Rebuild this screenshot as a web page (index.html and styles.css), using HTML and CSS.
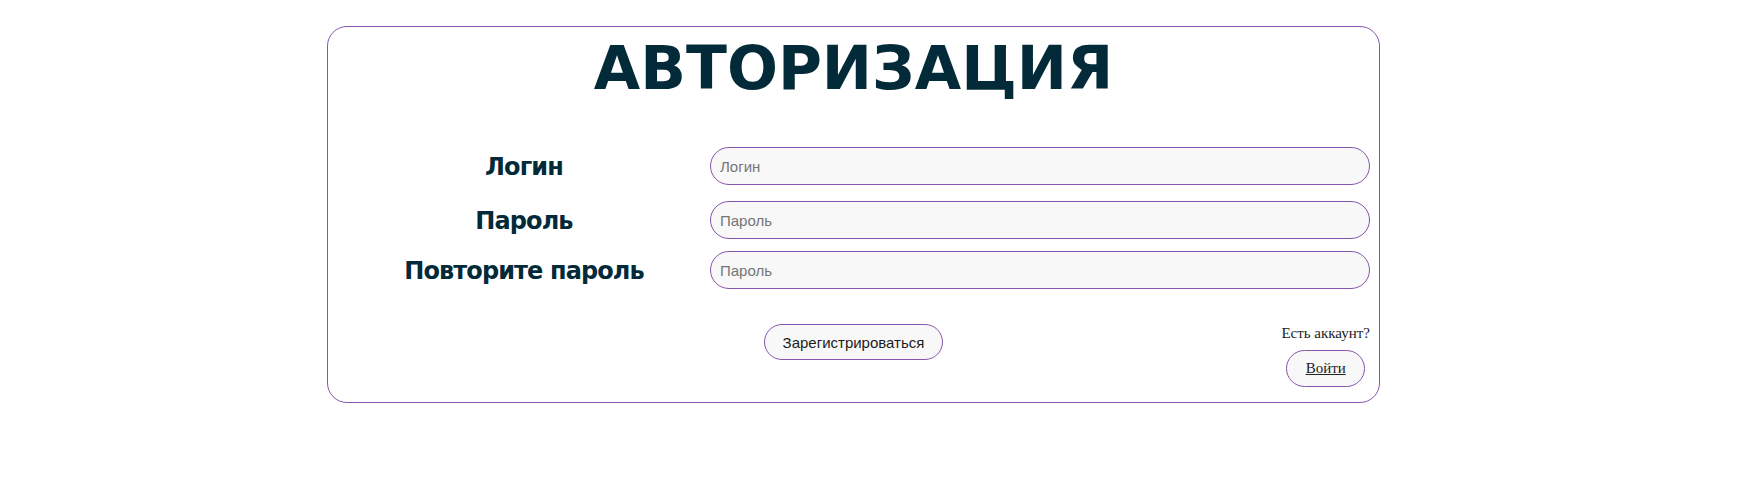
FILE: index.html
```html
<!DOCTYPE html>
<html lang="ru">
<head>
<meta charset="utf-8">
<title>Авторизация</title>
<link rel="stylesheet" href="styles.css">
</head>
<body>
<div class="card">
  <h1 class="title">АВТОРИЗАЦИЯ</h1>
  <form class="form">
    <div class="row row-1">
      <label class="label" for="login">Логин</label>
      <input class="field" id="login" type="text" placeholder="Логин">
    </div>
    <div class="row row-2">
      <label class="label" for="pass">Пароль</label>
      <input class="field" id="pass" type="password" placeholder="Пароль">
    </div>
    <div class="row row-3">
      <label class="label" for="pass2">Повторите пароль</label>
      <input class="field" id="pass2" type="password" placeholder="Пароль">
    </div>
    <div class="actions">
      <button class="btn btn-register" type="button">Зарегистрироваться</button>
      <div class="account">
        <span class="account-text">Есть аккаунт?</span>
        <a class="btn btn-login" href="#">Войти</a>
      </div>
    </div>
  </form>
</div>
</body>
</html>
```
FILE: styles.css
```css
html, body {
  margin: 0;
  padding: 0;
  background: #ffffff;
}

body {
  font-family: "Liberation Serif", "Times New Roman", serif;
}

.card {
  box-sizing: border-box;
  width: 1053px;
  height: 377px;
  margin: 26px 0 0 327px;
  border: 1px solid #8755ad;
  border-radius: 20px;
}

.title {
  margin: 0;
  padding-top: 4px;
  height: 87px;
  text-align: center;
  font-family: "DejaVu Sans", Verdana, sans-serif;
  font-weight: bold;
  font-size: 60px;
  line-height: 74px;
  color: #032a38;
}

.form {
  display: flex;
  flex-direction: column;
  padding-right: 9px;
}

.row {
  display: grid;
  grid-template-columns: 382px 1fr;
  align-items: center;
}

.row-1 { margin-top: 29px; }
.row-2 { margin-top: 16px; }
.row-3 { margin-top: 12px; }

.label {
  padding-left: 10px;
  padding-top: 2px;
  text-align: center;
  font-family: "DejaVu Sans", Verdana, sans-serif;
  font-weight: bold;
  font-size: 24px;
  letter-spacing: -0.9px;
  color: #032a38;
}

.field {
  box-sizing: border-box;
  width: 100%;
  height: 38px;
  border: 1px solid #8755ad;
  border-radius: 19px;
  background: #f8f8f8;
  padding: 0 9px;
  font-family: "Liberation Sans", Arial, sans-serif;
  font-size: 15px;
  color: #222;
  outline: none;
}

.field::placeholder {
  color: #757575;
}

.actions {
  display: flex;
  align-items: flex-start;
  margin-top: 35px;
}

.btn {
  box-sizing: border-box;
  border: 1px solid #8755ad;
  border-radius: 19px;
  background: #f8f8f8;
  display: inline-flex;
  align-items: center;
  justify-content: center;
}

.btn-register {
  width: 179px;
  height: 36px;
  margin-left: 436px;
  padding: 0;
  font-family: "Liberation Sans", Arial, sans-serif;
  font-size: 15px;
  color: #1c1c1c;
}

.account {
  margin-left: auto;
  display: flex;
  flex-direction: column;
  align-items: center;
}

.account-text {
  font-size: 15px;
  line-height: 17px;
  margin-top: 1px;
  color: #222;
}

.btn-login {
  width: 79px;
  height: 37px;
  margin-top: 8px;
  font-size: 15px;
  color: #222;
  text-decoration: underline;
}
```
